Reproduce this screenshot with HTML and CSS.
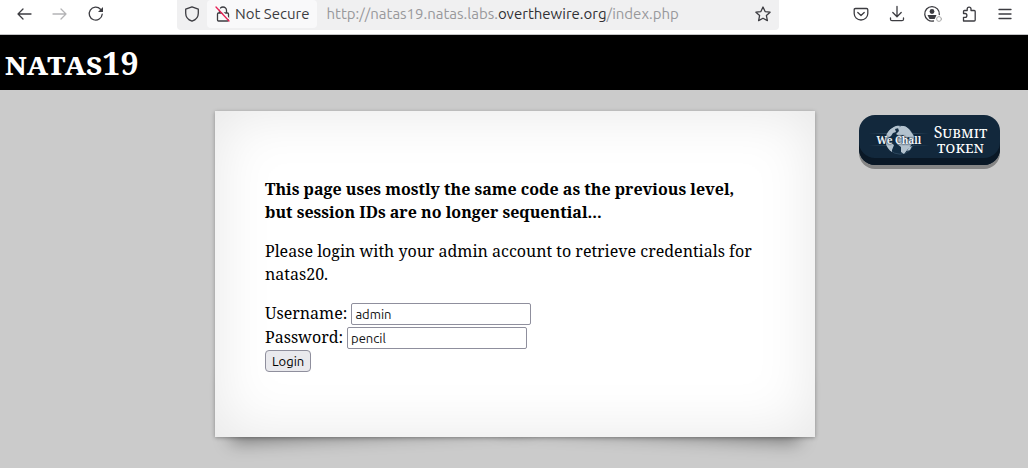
FILE: index.html
```html
<!DOCTYPE html>
<html lang="en">
<head>
<meta charset="utf-8">
<meta name="viewport" content="width=device-width, initial-scale=1">
<title>natas19</title>
<link rel="stylesheet" href="styles.css">
</head>
<body>
<nav class="toolbar" aria-label="Browser">
  <div class="nav-buttons">
    <button class="icon-button" aria-label="Back"><svg viewBox="0 0 16 16"><path d="M15 8H2M7 3L2 8l5 5"/></svg></button>
    <button class="icon-button dim" aria-label="Forward"><svg viewBox="0 0 16 16"><path d="M1 8h13M9 3l5 5-5 5"/></svg></button>
    <button class="icon-button" aria-label="Reload"><svg viewBox="0 0 16 16"><path d="M14.2 8.2A6.5 6.5 0 1 1 12.5 3.200"/><path class="solid" d="M15 1v5h-5z"/></svg></button>
  </div>
  <div class="address">
    <button class="icon-button shield" aria-label="Tracking protection"><svg viewBox="0 0 16 16"><path d="M8 .8l6.300 2.400v4c0 3.800-2.500 6.600-6.300 8-3.800-1.400-6.300-4.200-6.300-8v-4z"/></svg></button>
    <button class="security"><svg viewBox="0 0 16 16"><path d="M4.500 7V4.500a3.500 3.500 0 0 1 7 0V7M3.500 7h9q1 0 1 1v6q0 1-1 1h-9q-1 0-1-1V8q0-1 1-1z"/><path class="strike-gap" d="M2.500 .5l12 13"/><path class="strike" d="M1 1l13 14"/></svg><span>Not Secure</span></button>
    <div class="url"><span>http://natas19.natas.labs.</span><b>overthewire.org</b><span>/index.php</span></div>
    <button class="icon-button" aria-label="Bookmark"><svg viewBox="0 0 16 16"><path d="M8 1l2.100 4.600 5 .6-3.700 3.400 1 5L8 12.200l-4.400 2.400 1-5L.9 6.200l5-.6z"/></svg></button>
  </div>
  <div class="tools">
    <button class="icon-button" aria-label="Save to Pocket"><svg viewBox="0 0 16 16"><path d="M2.500 2.500h11q1.300 0 1.300 1.300V7.500a6.800 6.500 0 0 1-13.600 0V3.800q0-1.300 1.300-1.300zM4.800 6.500L8 9.500l3.200-3"/></svg></button>
    <button class="icon-button" aria-label="Downloads"><svg viewBox="0 0 16 16"><path d="M8 .5v10M3.800 6.500L8 10.700l4.200-4.200M1.500 12v1.200q0 1.500 1.500 1.500h10q1.500 0 1.500-1.500V12"/></svg></button>
    <button class="icon-button" aria-label="Account"><svg class="account" viewBox="0 0 18 16"><path d="M9.500 15A7.300 7.300 0 1 1 15.300 8.500"/><circle class="solid" cx="8" cy="5.500" r="2.400"/><path class="solid" d="M3.500 9h9l-1.800 4H5.500z"/><circle class="status" cx="15" cy="13" r="2.400"/></svg></button>
    <button class="icon-button" aria-label="Extensions"><svg viewBox="0 0 16 16"><path d="M2.500 15h10.700q1 0 1-1V5.500q0-1-1-1H10V3a1.900 1.900 0 0 0-3.800 0v1.500H3.500q-1 0-1 1V7.500H4a1.900 1.900 0 0 1 0 3.800H2.500z"/></svg></button>
    <button class="icon-button" aria-label="Menu"><svg viewBox="0 0 16 16"><path d="M2 3.500h12M2 8h12M2 12.500h12"/></svg></button>
  </div>
</nav>
<header class="banner"><h1>natas19</h1></header>
<main class="page">
  <section class="card">
    <p class="lead">This page uses mostly the same code as the previous level, but session IDs are no longer sequential...</p>
    <p>Please login with your admin account to retrieve credentials for natas20.</p>
    <form class="login">
      <div class="field"><label for="username">Username:</label><input id="username" type="text" value="admin"></div>
      <div class="field"><label for="password">Password:</label><input id="password" type="text" value="pencil"></div>
      <button type="submit">Login</button>
    </form>
  </section>
  <button class="token">
    <span class="logo">
      <svg viewBox="0 0 60 34" aria-hidden="true">
        <defs>
          <linearGradient id="beam"><stop offset="0" stop-color="#6c8fa8" stop-opacity="0"/><stop offset=".5" stop-color="#7f9bb0"/><stop offset="1" stop-color="#6c8fa8" stop-opacity="0"/></linearGradient>
          <clipPath id="globe"><circle cx="31" cy="17" r="14.500"/></clipPath>
        </defs>
        <path d="M0 10h60v.5H0zM0 22h60v.6H0z" fill="url(#beam)"/>
        <circle cx="31" cy="17" r="14.200" fill="#132d43" stroke="#47637a" stroke-width=".5"/>
        <g clip-path="url(#globe)" fill="#b3c2ce">
          <path d="M17 11l4-5 7-4 3 1-1 2-4 1 1 3-3 1-2 3-3 2 2 4 4 3-2 5 0 4-4-3-4-6z"/>
          <path d="M32 3l5 0 3 3 5 7 1 5-4-1-2-3-3 1-3-3-4 1-3-2 3-3-1-3z"/>
          <path d="M29 14l5-1 4 3 5 1 0 4-4 5-4 5-3-2 0-5-4-3-1-3z"/>
          <path d="M40 24l3-1-2 4-3 1z"/>
        </g>
      </svg>
      <span class="logo-text">We Chall</span>
    </span>
    <span class="token-text">Submit token</span>
  </button>
</main>
</body>
</html>
```
FILE: styles.css
```css
* { box-sizing: border-box; }
body {
  margin: 0;
  min-height: 100vh;
  display: flex;
  flex-direction: column;
  background: #cbcbcb;
  color: #000;
  font: 16px/23px "Noto Serif", "Droid Serif", "Liberation Serif", serif;
}
button { font: inherit; color: inherit; border: 0; background: none; padding: 0; }
svg { display: block; overflow: visible; }

.toolbar {
  display: flex;
  align-items: flex-start;
  height: 35px;
  background: #fff;
  border-bottom: 1px solid #c4c4c6;
  color: #3c3c41;
  font: 15px/28px Ubuntu, "Noto Sans", sans-serif;
}
.toolbar svg { width: 16px; height: 16px; fill: none; stroke: currentColor; stroke-width: 1.3; stroke-linejoin: round; stroke-linecap: round; }
.toolbar .account { width: 18px; }
.toolbar .solid { fill: currentColor; stroke: none; }
.toolbar .strike { stroke: #e82055; }
.toolbar .strike-gap { stroke: #f9f9fa; }
.toolbar .status { stroke: #aaa; stroke-width: 1; }
.icon-button { display: grid; place-items: center; width: 36px; height: 28px; }
.dim { color: #b4b4b6; }
.nav-buttons { display: flex; padding-left: 6px; }
.address {
  display: flex;
  flex: 1;
  height: 30px;
  margin: 0 64px 0 63px;
  background: #f0f0f1;
  border-radius: 0 0 4px 4px;
}
.shield { width: 30px; }
.security { display: flex; align-items: center; gap: 4px; height: 28px; padding: 0 8px; background: #f9f9fa; border-radius: 4px; white-space: nowrap; }
.url { flex: 1; padding-left: 9px; color: #98989b; white-space: nowrap; overflow: hidden; }
.url b { font-weight: 400; color: #303035; }
.address > .icon-button:last-child { width: 32px; }
.tools { display: flex; padding-right: 5px; }

.banner { background: #000; color: #fff; height: 55px; padding: 6px 5px; }
.banner h1 { margin: 0; font-size: 32px; line-height: 44px; font-variant: small-caps; }

.page {
  position: relative;
  z-index: 0;
  flex: 1;
  display: grid;
  grid-template-columns: 1fr minmax(0, 600px) 1fr;
  align-items: start;
  padding: 21px 0 31px 2px;
}
.card {
  grid-column: 2;
  position: relative;
  padding: 51px 50px 49px;
  background: #fff;
  box-shadow: 0 1px 4px rgba(0, 0, 0, .3), inset 0 0 60px rgba(0, 0, 0, .1);
}
.card::before, .card::after {
  content: "";
  position: absolute;
  z-index: -2;
  bottom: 17px;
  width: 50%;
  height: 20%;
  box-shadow: 0 15px 18px rgba(0, 0, 0, .4);
}
.card::before { left: 14px; transform: rotate(-3deg); }
.card::after { right: 14px; transform: rotate(3deg); }
.card p { margin: 16px 0; }
.lead { font-weight: 700; }
.login { margin-bottom: 16px; }
.field { display: flex; gap: 4px; align-items: center; height: 24px; }
.field label { align-self: flex-start; }
.field input {
  width: 180px;
  height: 22px;
  padding: 1px 3px;
  border: 1px solid #8f8f9d;
  border-radius: 2px;
  background: #fff;
  color: #111;
  font: 13px Ubuntu, "Noto Sans", sans-serif;
}
.login button {
  display: block;
  height: 22px;
  padding: 0 6px;
  border: 1px solid #8f8f9d;
  border-radius: 4px;
  background: #e9e9ed;
  font: 13px Ubuntu, "Noto Sans", sans-serif;
}
.token {
  grid-column: 3;
  justify-self: end;
  display: flex;
  align-items: center;
  width: 141px;
  height: 50px;
  margin: 4px 28px 0 0;
  padding: 0 8px 0 10px;
  border-radius: 16px;
  background: #12283c;
  box-shadow: inset 0 -7px #0a1826, 0 4px #858585;
  color: #fff;
}
.logo { display: grid; flex: none; width: 60px; place-items: center; }
.logo > * { grid-area: 1 / 1; }
.logo svg { width: 60px; height: 34px; }
.logo-text { font-size: 10px; font-weight: 700; line-height: 16px; white-space: nowrap; color: #eef3f7; text-shadow: 0 0 2px #12283c, 0 0 2px #12283c; }
.token-text { flex: 1; font-size: 16px; line-height: 15px; font-variant: small-caps; text-align: center; }
```
